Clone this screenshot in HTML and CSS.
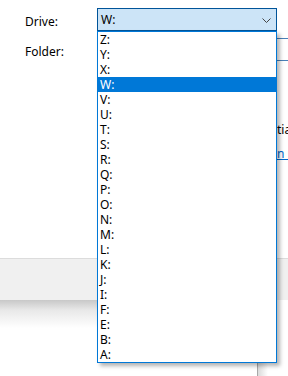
FILE: index.html
```html
<!DOCTYPE html>
<html lang="en">
<head>
    <meta charset="utf-8">
    <title>Map Network Drive</title>
    <link rel="stylesheet" href="styles.css">
</head>
<body>
    <div class="window">
        <div class="content">
            <div class="row row-drive">
                <label class="label">Drive:</label>
                <div class="combo">
                    <span class="combo-value">W:</span>
                    <svg class="chevron" width="9" height="5" viewBox="0 0 9 5">
                        <polyline points="0.5,0.5 4.5,4.5 8.5,0.5" fill="none" stroke="#444" stroke-width="1"/>
                    </svg>
                </div>
                <ul class="drive-list">
                    <li>Z:</li>
                    <li>Y:</li>
                    <li>X:</li>
                    <li class="selected">W:</li>
                    <li>V:</li>
                    <li>U:</li>
                    <li>T:</li>
                    <li>S:</li>
                    <li>R:</li>
                    <li>Q:</li>
                    <li>P:</li>
                    <li>O:</li>
                    <li>N:</li>
                    <li>M:</li>
                    <li>L:</li>
                    <li>K:</li>
                    <li>J:</li>
                    <li>I:</li>
                    <li>F:</li>
                    <li>E:</li>
                    <li>B:</li>
                    <li>A:</li>
                </ul>
            </div>
            <div class="row row-folder">
                <label class="label">Folder:</label>
                <div class="textbox"></div>
            </div>
            <p class="note">tia</p>
            <a class="link" href="#">n u</a>
        </div>
        <div class="footer"></div>
    </div>
    <div class="desk">
        <div class="other-window"></div>
    </div>
</body>
</html>
```

FILE: styles.css
```css
body {
    margin: 0;
    width: 288px;
    height: 376px;
    overflow: hidden;
    background: #fff;
    font-family: "Segoe UI", "Noto Sans", sans-serif;
    font-size: 12px;
    color: #000;
}
.window {
    height: 300px;
    background: #fff;
}
.content {
    height: 258px;
    padding-top: 8px;
    box-sizing: border-box;
    position: relative;
}
.row {
    display: flex;
    align-items: center;
    height: 23px;
}
.row-folder {
    margin-top: 7px;
}
.label {
    width: 72px;
    padding-left: 25px;
    padding-top: 3px;
}
.combo {
    width: 180px;
    height: 23px;
    box-sizing: border-box;
    border: 1px solid #005499;
    background: #cce4f7;
    display: flex;
    align-items: center;
    justify-content: space-between;
    padding: 0 5px 0 3px;
}
.combo-value {
    line-height: 16px;
}
.chevron {
    display: block;
    margin-top: 1px;
}
.textbox {
    flex: 1;
    height: 23px;
    box-sizing: border-box;
    border: 1px solid #4a80b8;
    border-right: none;
}
.drive-list {
    position: absolute;
    top: 31px;
    left: 97px;
    width: 180px;
    box-sizing: border-box;
    margin: 0;
    padding: 0;
    list-style: none;
    background: #fff;
    border: 1px solid #0078d7;
    box-shadow: 3px 3px 4px rgba(0, 0, 0, 0.3);
    z-index: 2;
}
.drive-list li {
    height: 15px;
    line-height: 15px;
    padding-left: 2px;
}
.drive-list li.selected {
    background: #0078d7;
    color: #fff;
}
.note {
    margin: 61px 0 0 277px;
    line-height: 16px;
    white-space: nowrap;
}
.link {
    display: block;
    margin: 8px 0 0 277px;
    line-height: 16px;
    color: #0066cc;
    white-space: nowrap;
}
.footer {
    height: 41px;
    border-top: 1px solid #dcdcdc;
    border-bottom: 1px solid #fafafa;
    background: #f0f0f0;
}
.desk {
    height: 76px;
    background: linear-gradient(#c8c8c8, #e8e8e8 10px, #fff 28px);
    display: flex;
}
.other-window {
    margin-left: 257px;
    flex: 1;
    border-left: 1px solid #a8a8a8;
    background: linear-gradient(to right, #dadada, #fff 10px);
}
```
